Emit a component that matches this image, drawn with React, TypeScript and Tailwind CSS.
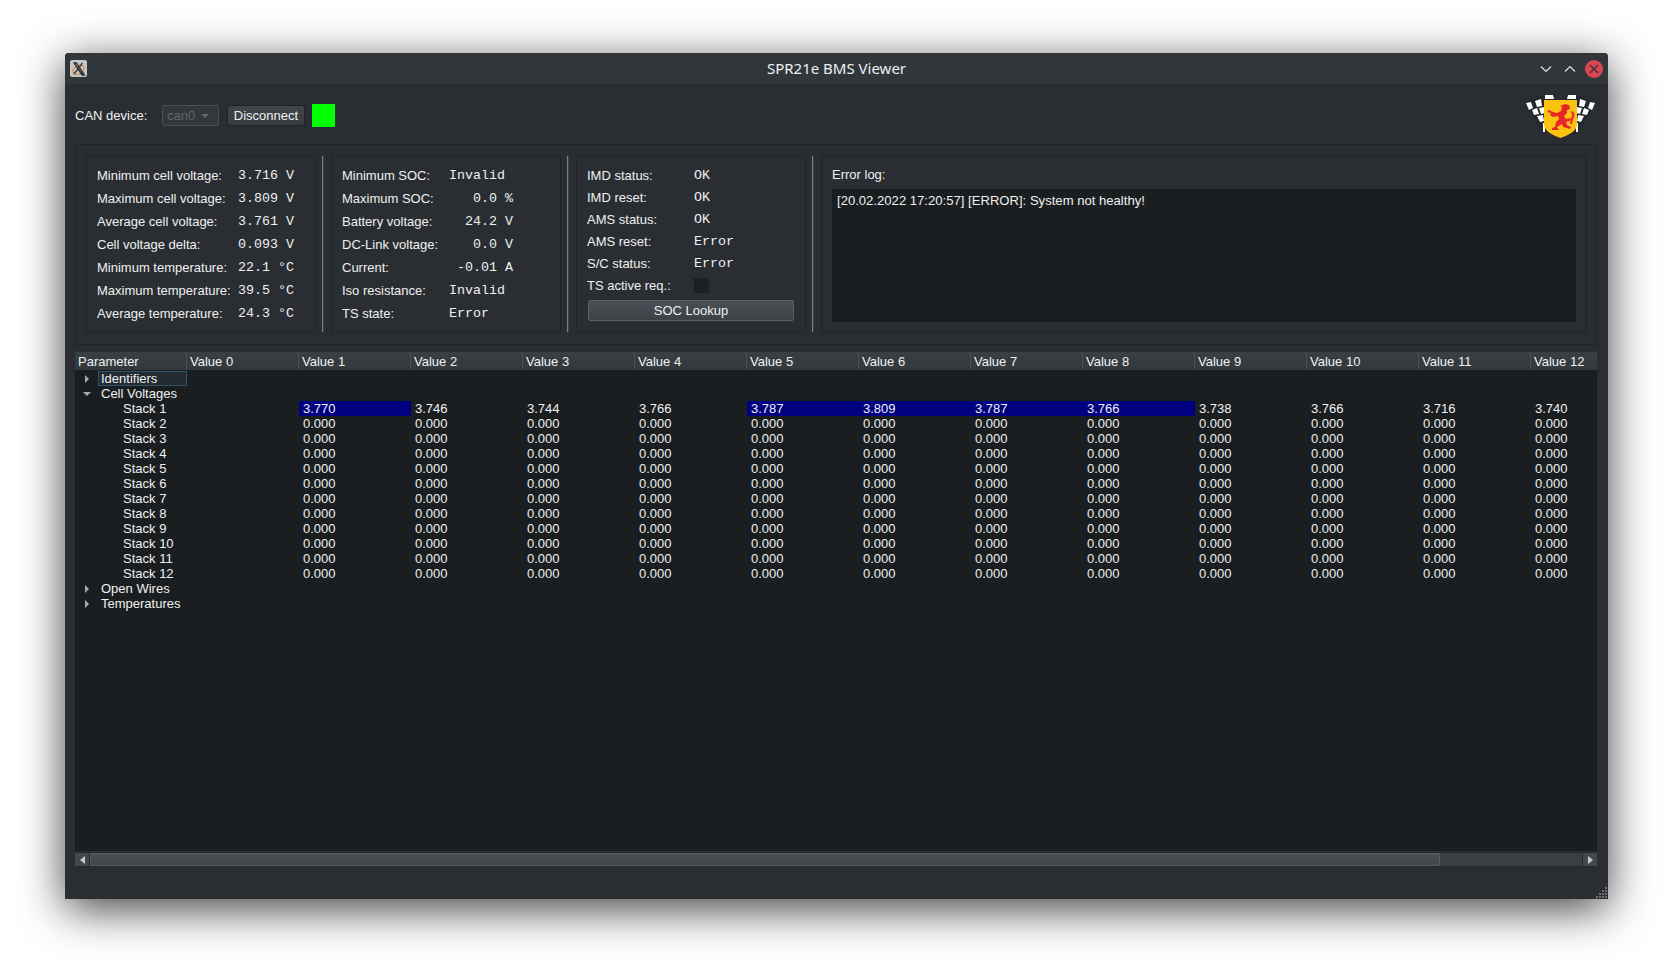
import React from 'react';

const SANS = "font-['Liberation_Sans',sans-serif]";
const MONO = "font-['Liberation_Mono',monospace] text-[13.33px]";

const group1 = [
  ['Minimum cell voltage:', '3.716 V'],
  ['Maximum cell voltage:', '3.809 V'],
  ['Average cell voltage:', '3.761 V'],
  ['Cell voltage delta:', '0.093 V'],
  ['Minimum temperature:', '22.1 °C'],
  ['Maximum temperature:', '39.5 °C'],
  ['Average temperature:', '24.3 °C'],
];

const group2: [string, string, boolean][] = [
  ['Minimum SOC:', 'Invalid', false],
  ['Maximum SOC:', '0.0 %', true],
  ['Battery voltage:', '24.2 V', true],
  ['DC-Link voltage:', '0.0 V', true],
  ['Current:', '-0.01 A', true],
  ['Iso resistance:', 'Invalid', false],
  ['TS state:', 'Error', false],
];

const group3 = [
  ['IMD status:', 'OK'],
  ['IMD reset:', 'OK'],
  ['AMS status:', 'OK'],
  ['AMS reset:', 'Error'],
  ['S/C status:', 'Error'],
];

const stack1 = ['3.770', '3.746', '3.744', '3.766', '3.787', '3.809', '3.787', '3.766', '3.738', '3.766', '3.716', '3.740'];
const highlighted = [0, 4, 5, 6, 7];
const columns = Array.from({ length: 13 }, (_, i) => `Value ${i}`);

const Frame: React.FC<{ className?: string; children: React.ReactNode }> = ({ className = '', children }) => (
  <div className={`border border-[#202327] h-[176px] shrink-0 ${className}`}>{children}</div>
);

const VLine = () => <div className="w-[2px] h-[176px] ml-[6px] mr-[7px] shrink-0 bg-[#78838c] border-r border-[#3a3f44]" />;

const TreeArrow: React.FC<{ open?: boolean }> = ({ open }) => (
  <svg width="8" height="8" viewBox="0 0 8 8" className="block">
    {open ? <path d="M0 2h8L4 6z" fill="#a6abaf" /> : <path d="M2 0l4 4-4 4z" fill="#a6abaf" />}
  </svg>
);

const Logo = () => {
  const wing = (
    <g>
      <path d="M0 9 L10 4 L19 1 L30 0 L30 40 L20 39 L12 30 L6 18 Z" fill="#23262a" />
      <g fill="#fff">
        <path d="M1 9l5-1 2 6-4 2z" />
        <path d="M10 7l6-2 1 7-5 1z" />
        <path d="M7 16l5-2 2 6-5 1z" />
        <path d="M14 14l6-1v6l-4 1z" />
        <path d="M12 22l6-1 1 6-4 1z" />
        <path d="M18 29h2v9h-2z" />
        <path d="M20 1h8l1 4h-9z" />
      </g>
    </g>
  );
  return (
    <svg width="72" height="45" viewBox="0 0 72 45" className="block">
      {wing}
      <g transform="translate(71 0) scale(-1 1)">{wing}</g>
      <path d="M19 6h33v24c0 7-8 11-16.500 14C27 41 19 37 19 30z" fill="#fbc30f" />
      <path
        d="M40 10l4 1 1 4-3 1 0 3-3 3 2 3 5-1-1 3-4 1 1 3 4 2-1 2-7-2-1-3-5 3 2 3-7 0 0-2 3-1 1-5 3-3-1-3-5 1-3-2 1-2-4-1 2-2 4 2 4 1 4-2 1-4-2-1z"
        fill="#e8262a"
      />
      <path d="M47 17c3 2 3 5 1 8l-1 5-2 0 1-6c2-2 1-4 0-6z" fill="#e8262a" />
    </svg>
  );
};

export default function App() {
  return (
    <div className={`w-[1673px] h-[976px] bg-white pl-[65px] pt-[53px] overflow-hidden text-[13px] leading-[15px] text-[#eff0f1] ${SANS}`}>
      <div className="w-[1543px] h-[846px] flex flex-col rounded-t-[4px] bg-[#2a2e32] shadow-[0_10px_45px_rgba(0,0,0,0.75)]">
        {/* title bar */}
        <div className="h-[31px] rounded-t-[4px] bg-[#31363b] grid grid-cols-[1fr_auto_1fr] items-center">
          <div className="pl-[5px]">
            <div className="w-[17px] h-[17px] rounded-[2px] bg-[#c4c8cb]">
              <svg width="17" height="17" viewBox="0 0 17 17" className="block">
                <ellipse cx="8.500" cy="10" rx="6" ry="4" fill="none" stroke="#e08a3c" strokeWidth="1.300" transform="rotate(-30 8.500 10)" />
                <path d="M4 3l9 12M4 3h2.500l8 12h-2.500zM12.500 3L4 14" stroke="#30343a" strokeWidth="1.300" fill="none" />
              </svg>
            </div>
          </div>
          <div className="font-['Noto_Sans',sans-serif] text-[15px]">SPR21e BMS Viewer</div>
          <div className="flex items-center justify-end pr-[5px]">
            <svg width="12" height="8" viewBox="0 0 12 8" className="block mr-[12px]">
              <path d="M1 1.500l5 5 5-5" fill="none" stroke="#dfe1e3" strokeWidth="1.200" />
            </svg>
            <svg width="12" height="8" viewBox="0 0 12 8" className="block mr-[9px]">
              <path d="M1 6.500l5-5 5 5" fill="none" stroke="#dfe1e3" strokeWidth="1.200" />
            </svg>
            <svg width="18" height="18" viewBox="0 0 18 18" className="block">
              <circle cx="9" cy="9" r="9" fill="#da4453" />
              <path d="M5 5l8 8M13 5l-8 8" stroke="#31363b" strokeWidth="1.300" />
            </svg>
          </div>
        </div>

        <div className="flex-1 pl-[10px] pr-[11px] flex flex-col relative">
          {/* toolbar */}
          <div className="h-[60px] flex items-center pt-[3px]">
            <span className="w-[87px]">CAN device:</span>
            <div className="w-[57px] h-[21px] rounded-[2px] border border-[#4a5056] bg-[#33373c] text-[#5f656a] flex items-center justify-between pl-[4px] pr-[9px]">
              <span>can0</span>
              <span className="w-0 h-0 border-x-[4px] border-x-transparent border-t-[4px] border-t-[#5f656a]" />
            </div>
            <button className="ml-[8px] w-[78px] h-[21px] rounded-[2px] border border-[#1f2226] bg-gradient-to-b from-[#41464b] to-[#373b40] text-[#eff0f1]">Disconnect</button>
            <div className="ml-[7px] w-[23px] h-[23px] bg-[#00ff00]" />
            <div className="ml-auto mt-[2px]"><Logo /></div>
          </div>

          {/* status groups */}
          <div className="w-[1522px] h-[201px] border border-[#202327] pl-[10px] pt-[11px] flex items-start">
            <Frame className="w-[230px] pl-[10px] pt-[7px]">
              {group1.map(([label, value]) => (
                <div key={label} className="h-[23px] flex items-center">
                  <span className="w-[141px] whitespace-nowrap">{label}</span>
                  <span className={`${MONO} whitespace-pre`}>{value}</span>
                </div>
              ))}
            </Frame>
            <VLine />
            <Frame className="w-[230px] pl-[10px] pt-[7px]">
              {group2.map(([label, value, right]) => (
                <div key={label} className="h-[23px] flex items-center">
                  <span className="w-[107px] whitespace-nowrap">{label}</span>
                  <span className={`${MONO} w-[64px] whitespace-pre ${right ? 'text-right' : 'text-left'}`}>{value}</span>
                </div>
              ))}
            </Frame>
            <VLine />
            <Frame className="w-[230px] pl-[10px] pt-[7px]">
              {group3.map(([label, value]) => (
                <div key={label} className="h-[22px] flex items-center">
                  <span className="w-[107px] whitespace-nowrap">{label}</span>
                  <span className={MONO}>{value}</span>
                </div>
              ))}
              <div className="h-[22px] flex items-center">
                <span className="w-[107px] whitespace-nowrap">TS active req.:</span>
                <span className="w-[15px] h-[15px] bg-[#1d2023]" />
              </div>
              <button className="block mt-[4px] ml-[1px] w-[206px] h-[21px] rounded-[2px] border border-[#5a6066] bg-gradient-to-b from-[#4a4f54] to-[#3d4247]">SOC Lookup</button>
            </Frame>
            <VLine />
            <Frame className="w-[766px] pl-[10px] pt-[10px]">
              <div className="h-[22px]">Error log:</div>
              <div className="w-[744px] h-[133px] bg-[#1b1e20] px-[5px] py-[4px] text-[13.1px]">[20.02.2022 17:20:57] [ERROR]: System not healthy!</div>
            </Frame>
          </div>

          {/* tree table */}
          <div className="mt-[7px] h-[499px] bg-[#1b1e20] overflow-hidden">
            <div className="flex h-[18px] bg-gradient-to-b from-[#3a3f44] to-[#33383d] overflow-hidden">
              <div className="w-[112px] shrink-0 pl-[3px] leading-[19px] border-r border-[#4a4f55]">Parameter</div>
              {columns.map((c) => (
                <div key={c} className="w-[112px] shrink-0 pl-[3px] leading-[19px] border-r border-[#4a4f55]">{c}</div>
              ))}
            </div>
            <div className="pt-[1px]">
              <div className="flex h-[15px] items-center">
                <span className="w-[23px] pl-[8px]"><TreeArrow /></span>
                <span className="w-[89px] h-[15px] pl-[2px] border border-[#2d5468] bg-[#232a30] leading-[13px]">Identifiers</span>
              </div>
              <div className="flex h-[15px] items-center">
                <span className="w-[23px] pl-[8px]"><TreeArrow open /></span>
                <span className="pl-[3px]">Cell Voltages</span>
              </div>
              {Array.from({ length: 12 }, (_, r) => (
                <div key={r} className="flex h-[15px]">
                  <span className="w-[112px] pl-[48px] shrink-0">Stack {r + 1}</span>
                  <span className="w-[112px] shrink-0" />
                  {stack1.map((v, c) => (
                    <span key={c} className={`w-[112px] shrink-0 pl-[4px] ${r === 0 && highlighted.includes(c) ? 'bg-[#000080]' : ''}`}>
                      {r === 0 ? v : '0.000'}
                    </span>
                  ))}
                </div>
              ))}
              <div className="flex h-[15px] items-center">
                <span className="w-[23px] pl-[8px]"><TreeArrow /></span>
                <span className="pl-[3px]">Open Wires</span>
              </div>
              <div className="flex h-[15px] items-center">
                <span className="w-[23px] pl-[8px]"><TreeArrow /></span>
                <span className="pl-[3px]">Temperatures</span>
              </div>
            </div>
          </div>

          {/* horizontal scrollbar */}
          <div className="h-[15px] mt-[1px] flex bg-[#3b4045] border-y border-[#24272b]">
            <div className="w-[15px] shrink-0 flex items-center justify-center bg-[#43484d] border-r border-[#24272b]">
              <span className="w-0 h-0 border-y-[4px] border-y-transparent border-r-[5px] border-r-[#c6c9cb]" />
            </div>
            <div className="w-[1350px] shrink-0 bg-gradient-to-b from-[#4a4f54] to-[#42474c] border border-[#565b60]" />
            <div className="flex-1" />
            <div className="w-[15px] shrink-0 flex items-center justify-center bg-[#43484d] border-l border-[#24272b]">
              <span className="w-0 h-0 border-y-[4px] border-y-transparent border-l-[5px] border-l-[#c6c9cb]" />
            </div>
          </div>

          {/* size grip */}
          <svg width="12" height="12" viewBox="0 0 12 12" className="absolute right-0 bottom-0">
            <g fill="#6b7075">
              <rect x="9" y="0" width="2" height="2" />
              <rect x="6" y="3" width="2" height="2" />
              <rect x="9" y="3" width="2" height="2" />
              <rect x="3" y="6" width="2" height="2" />
              <rect x="6" y="6" width="2" height="2" />
              <rect x="9" y="6" width="2" height="2" />
              <rect x="0" y="9" width="2" height="2" />
              <rect x="3" y="9" width="2" height="2" />
              <rect x="6" y="9" width="2" height="2" />
              <rect x="9" y="9" width="2" height="2" />
            </g>
          </svg>
        </div>
      </div>
    </div>
  );
}
